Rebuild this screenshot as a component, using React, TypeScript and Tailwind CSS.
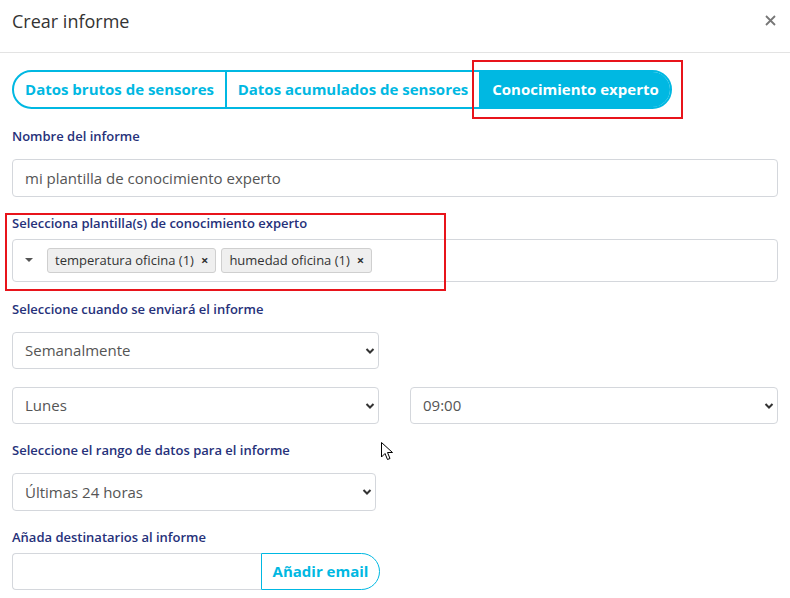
const cyan = "#00b8e2";

const Chevron = () => (
  <svg className="pointer-events-none absolute right-[4px] top-1/2 -translate-y-1/2" width="10" height="7" viewBox="0 0 10 7">
    <path d="M1.5 1.5 L5 5 L8.5 1.5" fill="none" stroke="#333" strokeWidth="2" />
  </svg>
);

const Select = ({ value, className }: { value: string; className: string }) => (
  <div className={`relative ${className}`}>
    <select
      defaultValue={value}
      className="h-full w-full appearance-none rounded border border-[#d4d7dc] bg-white pl-[12px] text-[15px] text-[#555] outline-none font-['Open_Sans',sans-serif]"
    >
      <option>{value}</option>
    </select>
    <Chevron />
  </div>
);

const Label = ({ children, className }: { children: string; className: string }) => (
  <p className={`h-4 text-[13px] leading-4 font-semibold text-[#26317a] ${className}`}>{children}</p>
);

const Chip = ({ text }: { text: string }) => (
  <span className="flex h-[25px] items-center gap-[7px] rounded-[3px] border border-[#cfcfcf] bg-[#efefef] px-[7px] text-[13px] text-[#333]">
    {text}
    <span className="text-[13px] font-bold leading-none">×</span>
  </span>
);

export default function App() {
  return (
    <div className="relative h-[598px] w-[790px] overflow-hidden bg-white font-['Open_Sans',sans-serif]">
      <header className="flex h-[53px] items-start justify-between border-b border-[#e3e3e3] px-[12px] pt-[8px]">
        <h1 className="text-[18px] leading-[26px] text-[#333]">Crear informe</h1>
        <svg className="mr-[2px] mt-[7px]" width="11" height="11" viewBox="0 0 11 11">
          <path d="M1 1 L10 10 M10 1 L1 10" stroke="#777" strokeWidth="1.8" />
        </svg>
      </header>

      <main className="px-[12px]">
        <div className="mt-[17px] flex h-[39px] w-[660px] overflow-hidden rounded-full border-2 border-[#00b8e2] text-[15px] font-bold">
          <div className="flex w-[213px] items-center justify-center border-r-2 border-[#00b8e2] text-[#00b8e2]">
            Datos brutos de sensores
          </div>
          <div className="flex w-[254px] items-center justify-center border-r-2 border-[#00b8e2] text-[#00b8e2]">
            Datos acumulados de sensores
          </div>
          <div className="flex flex-1 items-center justify-center bg-[#00b8e2] text-white">Conocimiento experto</div>
        </div>

        <Label className="mt-[19px]">Nombre del informe</Label>
        <input
          defaultValue="mi plantilla de conocimiento experto"
          className="mt-[15px] h-[38px] w-[766px] rounded border border-[#d4d7dc] px-[12px] text-[15px] text-[#555] outline-none"
        />

        <Label className="mt-[18px]">Selecciona plantilla(s) de conocimiento experto</Label>
        <div className="mt-[8px] flex h-[43px] w-[766px] items-center gap-[5px] rounded border border-[#d4d7dc] pl-[12px]">
          <svg className="mr-[9px]" width="8" height="5" viewBox="0 0 8 5">
            <path d="M0 0 L8 0 L4 4 Z" fill="#555" />
          </svg>
          <Chip text="temperatura oficina (1)" />
          <Chip text="humedad oficina (1)" />
        </div>

        <Label className="mt-[19px]">Seleccione cuando se enviará el informe</Label>
        <Select value="Semanalmente" className="mt-[15px] h-[37px] w-[367px]" />
        <div className="mt-[18px] flex h-[37px] gap-[31px]">
          <Select value="Lunes" className="h-full w-[367px]" />
          <Select value="09:00" className="h-full w-[368px]" />
        </div>

        <Label className="mt-[18px]">Seleccione el rango de datos para el informe</Label>
        <Select value="Últimas 24 horas" className="mt-[15px] h-[38px] w-[364px]" />

        <Label className="mt-[18px]">Añada destinatarios al informe</Label>
        <div className="mt-[8px] flex h-[37px] w-[368px]">
          <input className="h-full w-[249px] rounded-l border border-r-0 border-[#d4d7dc] outline-none" />
          <button className="h-full flex-1 rounded-r-full border border-[#00b8e2] text-[15px] font-bold" style={{ color: cyan }}>
            Añadir email
          </button>
        </div>
      </main>

      {/* annotation boxes */}
      <div className="pointer-events-none absolute left-[472px] top-[60px] h-[59px] w-[211px] border-2 border-[#e8141b]" />
      <div className="pointer-events-none absolute left-[5px] top-[213px] h-[78px] w-[441px] border-2 border-[#e8141b]" />

      {/* mouse pointer */}
      <svg className="absolute left-[381px] top-[442px]" width="13" height="20" viewBox="0 0 13 20">
        <path d="M0.5 0.5 L0.5 15 L4 11.5 L6.5 17.5 L9 16.5 L6.5 10.5 L11.5 10.5 Z" fill="#fff" stroke="#000" strokeWidth="1" />
      </svg>
    </div>
  );
}
